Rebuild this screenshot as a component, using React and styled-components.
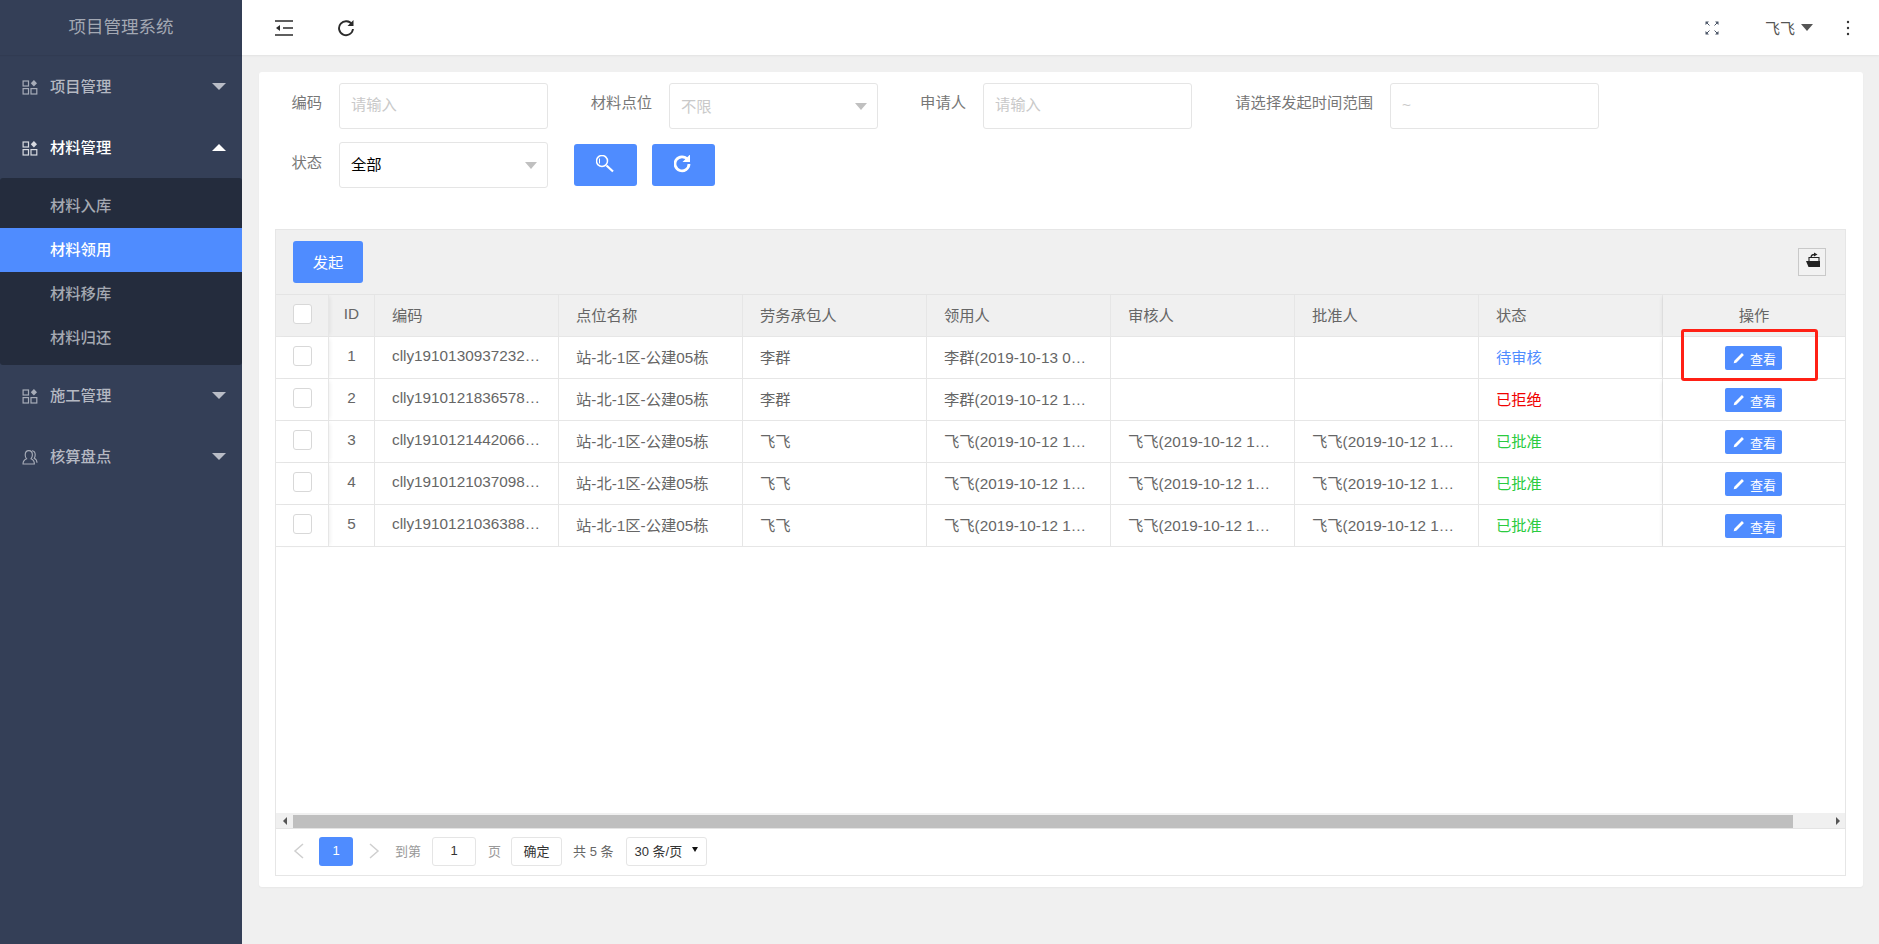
import React from "react";
import styled, { createGlobalStyle } from "styled-components";

const Global = createGlobalStyle`
  * { box-sizing: border-box; }
  html, body { margin: 0; padding: 0; height: 100%; background: #f0f0f0; overflow: hidden; }
  body { font-family: "Liberation Sans", "Noto Sans CJK SC", Arial, sans-serif; font-size: 15.3px; color: #666; }
  input, button { font-family: inherit; }
`;

const Page = styled.div`
  display: flex;
  height: 944px;
`;

const Sidebar = styled.aside`
  width: 242px;
  flex: none;
  background: #343f57;
`;

const Brand = styled.div`
  height: 55px;
  line-height: 54px;
  text-align: center;
  font-size: 17.5px;
  color: #a3a8b3;
  box-shadow: 0 1px 1px rgba(0, 0, 0, 0.05);
  margin-bottom: 1px;
`;

const NavGroup = styled.div`
  height: 61px;
  display: flex;
  align-items: center;
  padding: 0 16px 0 22px;
  color: ${(p) => (p.$open ? "#fff" : "#b4b8c2")};
  font-weight: 500;
`;

const NavIcon = styled.svg`
  width: 16px;
  height: 16px;
  flex: none;
  margin-right: 12px;
  color: ${(p) => (p.$open ? "#d8dae0" : "#a7acb8")};
`;

const NavLabel = styled.span`
  flex: 1;
  margin-bottom: 4px;
`;

const Caret = styled.i`
  display: block;
  flex: none;
  width: 0;
  height: 0;
  margin-bottom: ${(p) => p.$lift || 0}px;
  border-left: ${(p) => p.$w || 6}px solid transparent;
  border-right: ${(p) => p.$w || 6}px solid transparent;
  ${(p) => (p.$up ? "border-bottom" : "border-top")}: ${(p) => p.$h || 7}px solid ${(p) => p.$color || "#c0c0c0"};
`;

const SubMenu = styled.div`
  background: #242c3d;
  padding: 6px 0 5px;
  border-radius: 3px;
`;

const SubItem = styled.div`
  height: 44px;
  line-height: 44px;
  padding-left: 50px;
  font-weight: 500;
  color: ${(p) => (p.$active ? "#fff" : "#a5a9b2")};
  background: ${(p) => (p.$active ? "#4f8cff" : "transparent")};
`;

const Main = styled.main`
  flex: 1;
  min-width: 0;
  display: flex;
  flex-direction: column;
`;

const Header = styled.header`
  height: 55px;
  flex: none;
  background: #fff;
  display: flex;
  align-items: center;
  box-shadow: 0 1px 2px rgba(0, 0, 0, 0.06);
  padding: 0 23px 0 33px;
`;

const HeaderIcon = styled.svg`
  width: ${(p) => p.$size || 18}px;
  height: ${(p) => p.$size || 18}px;
  flex: none;
  margin-left: ${(p) => p.$before || 0}px;
  margin-right: ${(p) => p.$gap || 0}px;
  color: #2b2b2b;
`;

const HeaderSpace = styled.div`
  flex: 1;
`;

const UserName = styled.span`
  font-size: 15px;
  color: #555;
  margin: 0 6px 0 46px;
`;

const Card = styled.section`
  margin: 17px 16px 0 17px;
  height: 815px;
  background: #fff;
  border-radius: 3px;
  padding: 11px 17px 11px 16px;
  display: flex;
  flex-direction: column;
  box-shadow: 0 1px 2px rgba(0, 0, 0, 0.04);
`;

const FilterRow = styled.div`
  display: flex;
  align-items: flex-start;
  flex: none;
  margin-bottom: ${(p) => p.$mb || 0}px;
`;

const FieldLabel = styled.label`
  width: ${(p) => p.$w}px;
  flex: none;
  text-align: right;
  padding: ${(p) => p.$pt || 10}px 17px 0 0;
  line-height: 20px;
  color: #777;
  white-space: nowrap;
`;

const TextInput = styled.input`
  width: 209px;
  height: 46px;
  flex: none;
  border: 1px solid #e5e5e5;
  border-radius: 3px;
  padding: 0 11px 2px;
  font-size: 15.3px;
  color: #333;
  background: #fff;
  outline: none;
  &::placeholder { color: #c9c9c9; }
`;

const SelectBox = styled.div`
  width: 209px;
  height: 46px;
  flex: none;
  border: 1px solid #e5e5e5;
  border-radius: 3px;
  padding: 0 10px 0 11px;
  display: flex;
  align-items: center;
  justify-content: space-between;
  background: #fff;
  color: ${(p) => (p.$muted ? "#c9c9c9" : "#000")};
`;

const SelectValue = styled.span`
  margin-bottom: ${(p) => p.$mb}px;
`;

const IconButton = styled.button`
  width: 63px;
  height: 42px;
  flex: none;
  margin: 2px 0 0 ${(p) => p.$ml}px;
  border: 0;
  border-radius: 3px;
  background: #4f8cff;
  display: flex;
  align-items: center;
  justify-content: center;
  padding: 0;
`;

const TableBox = styled.div`
  flex: 1;
  min-height: 0;
  margin-top: 41px;
  border: 1px solid #e6e6e6;
  display: flex;
  flex-direction: column;
`;

const Toolbar = styled.div`
  height: 65px;
  flex: none;
  background: #f0f0f0;
  border-bottom: 1px solid #e4e4e4;
  display: flex;
  align-items: center;
  justify-content: space-between;
  padding: 0 19px 0 17px;
`;

const PrimaryButton = styled.button`
  width: 70px;
  height: 42px;
  border: 0;
  border-radius: 3px;
  background: #4f8cff;
  color: #fff;
  font-size: 15.3px;
  padding: 0 0 2px;
`;

const ExportButton = styled.button`
  width: 28px;
  height: 28px;
  padding: 0;
  border: 1px solid #c9c9c9;
  background: #f2f2f2;
  display: flex;
  align-items: center;
  justify-content: center;
`;

const Viewport = styled.div`
  flex: 1;
  min-height: 0;
  overflow: hidden;
`;

const Table = styled.table`
  width: 1569px;
  table-layout: fixed;
  border-collapse: separate;
  border-spacing: 0;
`;

const Cell = styled.td`
  height: 42px;
  padding: ${(p) => (p.$center ? "0 0 3px" : "0 17px 3px")};
  text-align: ${(p) => (p.$center ? "center" : "left")};
  border-bottom: 1px solid #e6e6e6;
  border-right: ${(p) => (p.$last ? "0" : "1px solid #e6e6e6")};
  overflow: hidden;
  white-space: nowrap;
  text-overflow: ellipsis;
  font-weight: 400;
  color: ${(p) => p.$color || "#666"};
  background: ${(p) => (p.$head ? "#f0f0f0" : "#fff")};
  ${(p) => (p.$shadow === "right" ? "box-shadow: 3px 0 4px -2px rgba(0,0,0,.07); position: relative;" : "")}
  ${(p) => (p.$shadow === "left" ? "box-shadow: -3px 0 4px -2px rgba(0,0,0,.07); position: relative;" : "")}
`;

const CheckBox = styled.span`
  display: block;
  width: 19px;
  height: 20px;
  margin: 0 0 0 17px;
  border: 1px solid #d8d8d8;
  border-radius: 3px;
  background: #fff;
`;

const ViewButton = styled.button`
  width: 57px;
  height: 24px;
  padding: 1px 0 0 3px;
  border: 0;
  border-radius: 2px;
  background: #4f8cff;
  color: #fff;
  font-size: 13px;
  display: inline-flex;
  align-items: center;
  justify-content: center;
  gap: 5px;
  vertical-align: middle;
  margin: 3px 2px 0 0;
`;

const HighlightFrame = styled.div`
  position: absolute;
  left: 1681px;
  top: 329px;
  width: 137px;
  height: 52px;
  border: 3px solid #ff2015;
  border-radius: 3px;
  pointer-events: none;
`;

const ScrollBar = styled.div`
  height: 16px;
  flex: none;
  background: #f0f0f0;
  border-bottom: 1px solid #e4e4e4;
  display: flex;
  align-items: center;
`;

const ScrollEnd = styled.div`
  width: ${(p) => p.$w}px;
  height: 100%;
  flex: none;
  display: flex;
  align-items: center;
  justify-content: ${(p) => p.$justify};
  padding: 0 5px;
`;

const ArrowHead = styled.i`
  display: block;
  width: 0;
  height: 0;
  border-top: 4px solid transparent;
  border-bottom: 4px solid transparent;
  ${(p) => (p.$dir === "left" ? "border-right" : "border-left")}: 4px solid #555;
`;

const ScrollThumb = styled.div`
  width: 1500px;
  height: 13px;
  align-self: flex-end;
  background: #bfbfbf;
`;

const Pagination = styled.div`
  height: 46px;
  flex: none;
  display: flex;
  align-items: center;
  padding: 0 0 2px 16px;
  font-size: 13px;
`;

const PageArrow = styled.svg`
  width: 14px;
  height: 16px;
  flex: none;
  margin: ${(p) => p.$m};
  color: #cfcfcf;
`;

const PageCurrent = styled.div`
  width: 34px;
  height: 29px;
  flex: none;
  border-radius: 3px;
  background: #4f8cff;
  color: #fff;
  text-align: center;
  line-height: 28px;
`;

const PageText = styled.span`
  color: ${(p) => p.$color || "#999"};
  margin: ${(p) => p.$m};
  white-space: nowrap;
`;

const PageBox = styled.div`
  width: ${(p) => p.$w}px;
  height: 29px;
  flex: none;
  border: 1px solid #e5e5e5;
  border-radius: 3px;
  background: #fff;
  color: #333;
  display: flex;
  align-items: center;
  justify-content: center;
  padding-bottom: 2px;
`;

const PageSize = styled(PageBox)`
  justify-content: space-between;
  padding: 0 8px 2px 8px;
`;

const GridIcon = ({ open }) => (
  <NavIcon $open={open} viewBox="0 0 16 16" fill="none" stroke="currentColor" strokeWidth="1.2">
    <rect x="1.1" y="2" width="5.4" height="5" />
    <rect x="1.1" y="9.6" width="5.4" height="5.4" />
    <rect x="9" y="9.6" width="5.8" height="5.4" />
    <path d="M11.9 1 15 4.2 11.9 7.4 8.8 4.2Z" fill="currentColor" stroke="none" />
  </NavIcon>
);

const UserIcon = () => (
  <NavIcon viewBox="0 0 16 16" fill="none" stroke="currentColor" strokeWidth="1.1">
    <path d="M1 15c0-3 1.6-4.3 3.6-5.2C3.5 8.6 3.2 7.4 3.2 6c0-2.6 1.3-4.4 3.6-4.4S10.4 3.4 10.4 6c0 1.4-.4 2.6-1.4 3.8 2 .9 3.4 2.2 3.4 5.2Z" />
    <path d="M10 1.8c2 .2 3.2 1.8 3.2 4 0 1.3-.3 2.4-1 3.4 1.7.8 2.8 2 2.8 4.6" />
  </NavIcon>
);

const PenIcon = () => (
  <svg width="12" height="12" viewBox="0 0 11 11"><path d="M8.2 1 10 2.8 3 9.8 .6 10.4 1.2 8Z" fill="#fff" /></svg>
);

const columns = ["编码", "点位名称", "劳务承包人", "领用人", "审核人", "批准人", "状态"];
const site = "站-北-1区-公建05栋";
const stamp = "飞飞(2019-10-12 14:42:06)";
const green = "#2bcb3f";
const rows = [
  { id: 1, code: "clly19101309372320001", owner: "李群", user: "李群(2019-10-13 09:37:23)", audit: "", approve: "", status: "待审核", color: "#4f8cff" },
  { id: 2, code: "clly19101218365780001", owner: "李群", user: "李群(2019-10-12 18:36:57)", audit: "", approve: "", status: "已拒绝", color: "#f00000" },
  { id: 3, code: "clly19101214420660001", owner: "飞飞", user: stamp, audit: stamp, approve: stamp, status: "已批准", color: green },
  { id: 4, code: "clly19101210370980001", owner: "飞飞", user: stamp, audit: stamp, approve: stamp, status: "已批准", color: green },
  { id: 5, code: "clly19101210363880001", owner: "飞飞", user: stamp, audit: stamp, approve: stamp, status: "已批准", color: green },
];

export default function App() {
  return (
    <Page>
      <Global />
      <Sidebar>
        <Brand>项目管理系统</Brand>
        <NavGroup><GridIcon /><NavLabel>项目管理</NavLabel><Caret $w={7} $h={7} $color="#b9bdc7" /></NavGroup>
        <NavGroup $open><GridIcon open /><NavLabel>材料管理</NavLabel><Caret $up $w={7} $h={7} $color="#fff" /></NavGroup>
        <SubMenu>
          <SubItem>材料入库</SubItem>
          <SubItem $active>材料领用</SubItem>
          <SubItem>材料移库</SubItem>
          <SubItem>材料归还</SubItem>
        </SubMenu>
        <NavGroup><GridIcon /><NavLabel>施工管理</NavLabel><Caret $w={7} $h={7} $color="#b9bdc7" /></NavGroup>
        <NavGroup><UserIcon /><NavLabel>核算盘点</NavLabel><Caret $w={7} $h={7} $color="#b9bdc7" /></NavGroup>
      </Sidebar>
      <Main>
        <Header>
          <HeaderIcon $gap={44} viewBox="0 0 18 18" fill="none" stroke="currentColor" strokeWidth="1.6">
            <path d="M0 2h18M8 9h10M0 16h18" />
            <path d="M5 6 1 9l4 3Z" fill="currentColor" stroke="none" />
          </HeaderIcon>
          <HeaderIcon viewBox="0 0 18 18" fill="none" stroke="currentColor" strokeWidth="1.9">
            <path d="M15 5.5A7 7 0 1 0 16 10" />
            <path d="M16.5 1v6h-6Z" fill="currentColor" stroke="none" />
          </HeaderIcon>
          <HeaderSpace />
          <HeaderIcon $size={14} viewBox="0 0 14 14" fill="none" stroke="#4a5566" strokeWidth="1">
            <path d="M1 1l3.5 3.5M9.5 4.5 13 1M1 13l3.5-3.5M9.5 9.5 13 13" />
            <path d="M.5 .5h3.5L.5 4ZM13.5 .5H10L13.5 4ZM.5 13.5H4L.5 10ZM13.5 13.5H10L13.5 10Z" fill="#4a5566" stroke="none" />
          </HeaderIcon>
          <UserName>飞飞</UserName>
          <Caret $w={6.5} $h={7} $color="#555" />
          <HeaderIcon $size={16} $before={27} viewBox="0 0 16 16" fill="#333">
            <circle cx="8" cy="2" r="1.2" /><circle cx="8" cy="8" r="1.2" /><circle cx="8" cy="14" r="1.2" />
          </HeaderIcon>
        </Header>
        <Card>
          <FilterRow $mb={13}>
            <FieldLabel $w={64}>编码</FieldLabel>
            <TextInput placeholder="请输入" />
            <FieldLabel $w={121}>材料点位</FieldLabel>
            <SelectBox $muted><SelectValue $mb={2}>不限</SelectValue><Caret /></SelectBox>
            <FieldLabel $w={105}>申请人</FieldLabel>
            <TextInput placeholder="请输入" />
            <FieldLabel $w={198}>请选择发起时间范围</FieldLabel>
            <TextInput placeholder="~" />
          </FilterRow>
          <FilterRow>
            <FieldLabel $w={64} $pt={11}>状态</FieldLabel>
            <SelectBox><SelectValue $mb={4}>全部</SelectValue><Caret /></SelectBox>
            <IconButton $ml={26} aria-label="搜索">
              <svg width="20" height="20" viewBox="0 0 20 20" fill="none" stroke="#fff">
                <circle cx="6" cy="6" r="5.5" strokeWidth="1.5" />
                <path d="M3.5 3.5v5" strokeWidth="1" />
                <path d="M10.5 10.5 17 16.5" strokeWidth="2.2" />
              </svg>
            </IconButton>
            <IconButton $ml={15} aria-label="刷新">
              <svg width="20" height="20" viewBox="0 0 20 20" fill="none" stroke="#fff" strokeWidth="2.8">
                <g transform="translate(-2 -2)">
                  <path d="M15.5 6.5A7 7 0 1 0 17 11" />
                  <path d="M18 1.5v7.5h-7.5Z" fill="#fff" stroke="none" />
                </g>
              </svg>
            </IconButton>
          </FilterRow>
          <TableBox>
            <Toolbar>
              <PrimaryButton>发起</PrimaryButton>
              <ExportButton aria-label="导出">
                <svg width="20" height="20" viewBox="1 3 20 20">
                  <path d="M5 12h14v6H7.5Z" fill="#222" />
                  <path d="M8 12V8.5h10V12" fill="none" stroke="#222" strokeWidth="1.1" />
                  <path d="M10 8.500C10 6.500 11.500 5.500 13.500 5.500" fill="none" stroke="#222" strokeWidth="1.4" />
                  <path d="M13 3.500 16.500 5.500 13 7.500Z" fill="#222" />
                </svg>
              </ExportButton>
            </Toolbar>
            <Viewport>
              <Table>
                <colgroup>
                  <col width="53" /><col width="46" />
                  {columns.map((c) => <col key={c} width="184" />)}
                  <col width="182" />
                </colgroup>
                <thead>
                  <tr>
                    <Cell as="th" $head $center $shadow="right"><CheckBox /></Cell>
                    <Cell as="th" $head $center>ID</Cell>
                    {columns.map((c) => <Cell as="th" $head key={c}>{c}</Cell>)}
                    <Cell as="th" $head $center $last $shadow="left">操作</Cell>
                  </tr>
                </thead>
                <tbody>
                  {rows.map((r) => (
                    <tr key={r.id}>
                      <Cell $center $shadow="right"><CheckBox /></Cell>
                      <Cell $center>{r.id}</Cell>
                      <Cell>{r.code}</Cell>
                      <Cell>{site}</Cell>
                      <Cell>{r.owner}</Cell>
                      <Cell>{r.user}</Cell>
                      <Cell>{r.audit}</Cell>
                      <Cell>{r.approve}</Cell>
                      <Cell $color={r.color}>{r.status}</Cell>
                      <Cell $center $last $shadow="left"><ViewButton><PenIcon />查看</ViewButton></Cell>
                    </tr>
                  ))}
                </tbody>
              </Table>
            </Viewport>
            <ScrollBar>
              <ScrollEnd $w={17} $justify="center"><ArrowHead $dir="left" /></ScrollEnd>
              <ScrollThumb />
              <ScrollEnd $w={52} $justify="flex-end"><ArrowHead $dir="right" /></ScrollEnd>
            </ScrollBar>
            <Pagination>
              <PageArrow $m="0 13px 0 0" viewBox="0 0 14 16" fill="none" stroke="currentColor" strokeWidth="1.5"><path d="M11 1 3 8l8 7" /></PageArrow>
              <PageCurrent>1</PageCurrent>
              <PageArrow $m="0 14px 0 14px" viewBox="0 0 14 16" fill="none" stroke="currentColor" strokeWidth="1.5"><path d="M3 1l8 7-8 7" /></PageArrow>
              <PageText $m="0 11px 2px 0">到第</PageText>
              <PageBox $w={44}>1</PageBox>
              <PageText $m="0 10px 2px 12px">页</PageText>
              <PageBox $w={51}>确定</PageBox>
              <PageText $color="#666" $m="0 12px 2px 11px">共 5 条</PageText>
              <PageSize $w={81}>30 条/页<Caret $w={3} $h={5} $lift={2} $color="#111" /></PageSize>
            </Pagination>
          </TableBox>
        </Card>
      </Main>
      <HighlightFrame />
    </Page>
  );
}
